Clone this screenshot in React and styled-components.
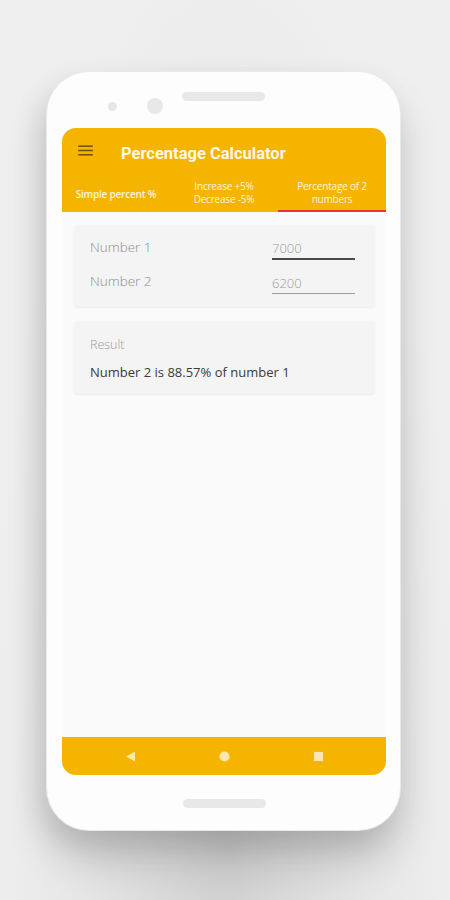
import React from "react";
import styled, { createGlobalStyle } from "styled-components";

const YELLOW = "#f5b400";

const tabs = [
  ["Simple percent %"],
  ["Increase +5%", "Decrease -5%"],
  ["Percentage of 2", "numbers"],
];

export default function App() {
  return (
    <>
      <GlobalStyle />
      <Page>
        <Phone>
          <TopBezel>
            <Sensor />
            <Camera />
            <Speaker />
          </TopBezel>
          <Screen>
            <AppBar>
              <TitleRow>
                <Burger viewBox="0 0 16 12">
                  <rect x="0" y="0.5" width="16" height="1.6" />
                  <rect x="0" y="5.2" width="16" height="1.6" />
                  <rect x="0" y="9.9" width="16" height="1.6" />
                </Burger>
                <Title>Percentage Calculator</Title>
              </TitleRow>
              <Tabs>
                {tabs.map((lines, i) => (
                  <Tab key={i} $active={i === 2} $bold={i === 0}>
                    {lines.map(l => (
                      <span key={l}>{l}</span>
                    ))}
                  </Tab>
                ))}
              </Tabs>
            </AppBar>
            <Content>
              <Card>
                <FieldRow>
                  <Label>Number 1</Label>
                  <Input $focused>7000</Input>
                </FieldRow>
                <FieldRow>
                  <Label>Number 2</Label>
                  <Input>6200</Input>
                </FieldRow>
              </Card>
              <Card $result>
                <Caption>Result</Caption>
                <ResultText>Number 2 is 88.57% of number 1</ResultText>
              </Card>
            </Content>
            <NavBar>
              <NavIcon viewBox="0 0 12 12">
                <polygon points="1,6 11,0.5 11,11.5" />
              </NavIcon>
              <NavIcon viewBox="0 0 12 12">
                <circle cx="6" cy="6" r="5.5" />
              </NavIcon>
              <NavIcon viewBox="0 0 12 12">
                <rect x="1" y="1" width="10" height="10" />
              </NavIcon>
            </NavBar>
          </Screen>
          <BottomBezel>
            <HomeBar />
          </BottomBezel>
        </Phone>
      </Page>
    </>
  );
}

const GlobalStyle = createGlobalStyle`
  body {
    margin: 0;
    background: #ededed;
    font-family: "Open Sans", "Liberation Sans", sans-serif;
  }
`;

const Page = styled.div`
  width: 450px;
  height: 900px;
  overflow: hidden;
  background: radial-gradient(ellipse at 50% 92%, #cfcfcf 0%, #e6e6e6 45%, #efefef 75%);
  padding-top: 72px;
  padding-left: 47px;
  box-sizing: border-box;
`;

const Phone = styled.div`
  width: 353px;
  height: 758px;
  background: #fdfdfd;
  border-radius: 42px;
  box-shadow: 0 0 0 1px #e9e9e9, 0 28px 40px rgba(0, 0, 0, 0.18),
    -8px 10px 30px rgba(0, 0, 0, 0.08);
  display: flex;
  flex-direction: column;
  align-items: center;
`;

const TopBezel = styled.div`
  height: 56px;
  width: 100%;
  display: flex;
  align-items: flex-start;
  padding-left: 61px;
  box-sizing: border-box;
`;

const Sensor = styled.div`
  width: 9px;
  height: 9px;
  border-radius: 50%;
  background: #e6e6e6;
  margin-top: 30px;
`;

const Camera = styled.div`
  width: 16px;
  height: 16px;
  border-radius: 50%;
  background: #e8e8e8;
  margin: 26px 0 0 30px;
`;

const Speaker = styled.div`
  width: 83px;
  height: 9px;
  border-radius: 5px;
  background: #e8e8e8;
  margin: 20px 0 0 19px;
`;

const Screen = styled.div`
  width: 324px;
  height: 647px;
  margin-left: 1px;
  border-radius: 14px;
  overflow: hidden;
  background: #fafafa;
  display: flex;
  flex-direction: column;
`;

const AppBar = styled.div`
  background: ${YELLOW};
`;

const TitleRow = styled.div`
  height: 47px;
  display: flex;
  align-items: center;
  padding-left: 16px;
  gap: 28px;
`;

const Burger = styled.svg`
  width: 15px;
  height: 11px;
  fill: #6e4d00;
  margin-top: -2px;
`;

const Title = styled.h1`
  margin: 0;
  font-family: Roboto, "Liberation Sans", sans-serif;
  font-weight: 700;
  font-size: 16.5px;
  color: #fff8e6;
  margin-top: 3px;
`;

const Tabs = styled.div`
  display: grid;
  grid-template-columns: repeat(3, 1fr);
  height: 37px;
`;

const Tab = styled.div`
  display: flex;
  flex-direction: column;
  align-items: center;
  justify-content: center;
  font-size: 10px;
  line-height: 13px;
  color: #fff4d6;
  font-weight: ${p => (p.$bold ? 600 : 400)};
  letter-spacing: -0.2px;
  border-bottom: 2px solid ${p => (p.$active ? "#e8323c" : "transparent")};
  padding-top: ${p => (p.$bold ? "3px" : "0")};
`;

const Content = styled.div`
  flex: 1;
  padding: 13px 11px 0 12px;
  display: flex;
  flex-direction: column;
  gap: 14px;
`;

const Card = styled.div`
  background: #f4f4f4;
  border-radius: 4px;
  box-shadow: 0 1px 2px rgba(0, 0, 0, 0.06);
  padding: ${p => (p.$result ? "15px 16px 13px" : "6px 20px 10px 16px")};
  display: flex;
  flex-direction: column;
  gap: ${p => (p.$result ? "10px" : "2px")};
`;

const FieldRow = styled.div`
  display: flex;
  align-items: center;
  justify-content: space-between;
  height: 32px;
`;

const Label = styled.span`
  font-size: 13.5px;
  color: #8c8c8c;
  font-weight: 300;
`;

const Input = styled.span`
  width: 83px;
  font-size: 13px;
  color: #9a9a9a;
  font-weight: 300;
  padding-bottom: 1px;
  margin-top: 5px;
  border-bottom: ${p => (p.$focused ? "2px solid #4a4a4a" : "1px solid #9e9e9e")};
`;

const Caption = styled.span`
  font-size: 12.5px;
  color: #9a9a9a;
  font-weight: 300;
`;

const ResultText = styled.span`
  font-size: 13px;
  color: #3a3a3a;
`;

const NavBar = styled.div`
  height: 38px;
  background: ${YELLOW};
  display: flex;
  align-items: center;
  justify-content: center;
  gap: 83px;
  padding-right: 0;
`;

const NavIcon = styled.svg`
  width: 11px;
  height: 11px;
  fill: #fde7ad;
`;

const BottomBezel = styled.div`
  flex: 1;
  display: flex;
  justify-content: center;
  align-items: flex-start;
  padding-top: 24px;
`;

const HomeBar = styled.div`
  width: 83px;
  height: 9px;
  border-radius: 5px;
  background: #e8e8e8;
  margin-left: 2px;
`;
